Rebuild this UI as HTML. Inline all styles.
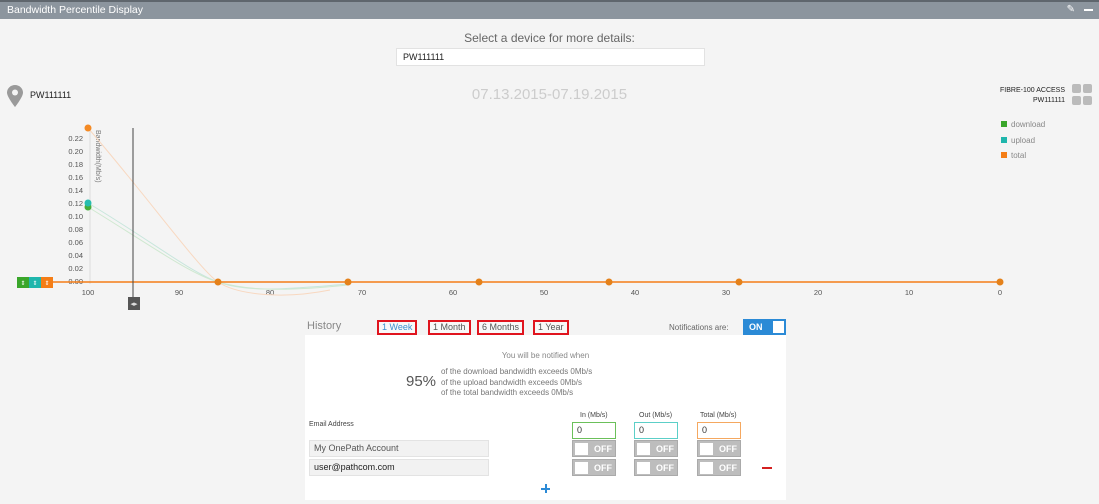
<!DOCTYPE html>
<html><head><style>
*{margin:0;padding:0;box-sizing:border-box}
body{width:1099px;height:504px;background:#f4f4f4;font-family:"Liberation Sans",sans-serif;position:relative;overflow:hidden;color:#333}
.abs{position:absolute}
.bar{left:0;top:0;width:1099px;height:19px;background:#8c959e;border-top:2px solid #5f666d;color:#fff;font-size:10.5px;line-height:16px;padding-left:7px}
.tb{border:2px solid #e0141e;font-size:9px;height:15px;line-height:11px;padding:0 3px;color:#555;background:#f8f8f8}
.off{width:44px;height:17px;background:#bdbdbd;border:1px solid #aaa}
.off i{position:absolute;left:2px;top:2px;width:13px;height:12px;background:#fff}
.off b{position:absolute;left:21px;top:3px;font-size:9px;color:#fff;font-weight:bold}
.inp{height:17px;border:1px solid #e3e3e3;background:#f2f2f2;font-size:9px;line-height:15px;padding-left:4px}
.num{width:44px;height:17px;background:#fff;font-size:9px;line-height:15px;padding-left:4px}
.sm{font-size:8px;color:#555}
</style></head><body>
<div class="abs bar">Bandwidth Percentile Display<span style="position:absolute;right:24px;top:0;font-size:10px">&#9998;</span><span style="position:absolute;right:6px;top:7px;width:9px;height:2px;background:#fff"></span></div>
<div class="abs" style="left:0;top:31px;width:1099px;text-align:center;font-size:12px;color:#666">Select a device for more details:</div>
<div class="abs" style="left:396px;top:48px;width:309px;height:18px;background:#fff;border:1px solid #e2e2e2;font-size:9px;line-height:16px;padding-left:6px;color:#222">PW111111</div>
<svg class="abs" style="left:7px;top:85px" width="16" height="22" viewBox="0 0 16 22"><path d="M8 0C3.6 0 0 3.4 0 7.6 0 12 8 22 8 22s8-10 8-14.4C16 3.4 12.4 0 8 0z" fill="#9a9a9a"/><circle cx="8" cy="7.5" r="3" fill="#f4f4f4"/></svg>
<div class="abs" style="left:30px;top:90px;font-size:9px;color:#222">PW111111</div>
<div class="abs" style="left:0;top:86px;width:1099px;text-align:center;font-size:15px;color:#ccc">07.13.2015-07.19.2015</div>
<div class="abs" style="right:34px;top:86px;font-size:7px;text-align:right;line-height:10px;color:#222">FIBRE-100 ACCESS<br>PW111111</div>
<div class="abs" style="left:1072px;top:84px;width:9px;height:9px;background:#bbb;border-radius:2px"></div>
<div class="abs" style="left:1083px;top:84px;width:9px;height:9px;background:#bbb;border-radius:2px"></div>
<div class="abs" style="left:1072px;top:96px;width:9px;height:9px;background:#bbb;border-radius:2px"></div>
<div class="abs" style="left:1083px;top:96px;width:9px;height:9px;background:#bbb;border-radius:2px"></div>
<div class="abs sm" style="left:1001px;top:117px;line-height:15.5px;color:#888"><span style="display:inline-block;width:6px;height:6px;background:#3aa62a;margin-right:4px"></span>download<br><span style="display:inline-block;width:6px;height:6px;background:#1fb6ac;margin-right:4px"></span>upload<br><span style="display:inline-block;width:6px;height:6px;background:#f47d16;margin-right:4px"></span>total</div>
<svg class="abs" style="left:0;top:0" width="1099" height="320" font-family="Liberation Sans" font-size="7.5" fill="#555">
<line x1="90" y1="130" x2="90" y2="284" stroke="#ddd"/>
<g text-anchor="end">
<text x="83" y="141">0.22</text><text x="83" y="154">0.20</text><text x="83" y="167">0.18</text><text x="83" y="180">0.16</text><text x="83" y="193">0.14</text><text x="83" y="206">0.12</text><text x="83" y="219">0.10</text><text x="83" y="232">0.08</text><text x="83" y="245">0.06</text><text x="83" y="258">0.04</text><text x="83" y="271">0.02</text><text x="83" y="284">0.00</text>
</g>
<text transform="translate(96,130) rotate(90)" font-size="7" fill="#777">Bandwidth(Mb/s)</text>
<g text-anchor="middle">
<text x="88" y="295">100</text><text x="179" y="295">90</text><text x="270" y="295">80</text><text x="362" y="295">70</text><text x="453" y="295">60</text><text x="544" y="295">50</text><text x="635" y="295">40</text><text x="726" y="295">30</text><text x="818" y="295">20</text><text x="909" y="295">10</text><text x="1000" y="295">0</text>
</g>
<path d="M88 128 C150 200 200 270 218 282 S280 300 330 290" stroke="#f8d8c0" fill="none"/>
<path d="M88 203 C150 240 190 272 218 282 S280 290 348 284" stroke="#c8e6dc" fill="none"/>
<path d="M88 207 C150 245 190 274 218 282 S280 292 348 285" stroke="#cfe8d0" fill="none"/>
<line x1="52" y1="282" x2="1000" y2="282" stroke="#f47d16" stroke-width="1.5"/>
<line x1="133" y1="128" x2="133" y2="297" stroke="#444"/>
<rect x="128" y="297" width="12" height="13" fill="#555"/>
<text x="134" y="306" fill="#ddd" font-size="7" text-anchor="middle">◂▸</text>
<g fill="#e4811a"><circle cx="218" cy="282" r="3.5"/><circle cx="348" cy="282" r="3.5"/><circle cx="479" cy="282" r="3.5"/><circle cx="609" cy="282" r="3.5"/><circle cx="739" cy="282" r="3.5"/><circle cx="1000" cy="282" r="3.5"/></g>
<circle cx="88" cy="128" r="3.5" fill="#f48a24"/>
<circle cx="88" cy="207" r="3.5" fill="#45ae3a"/>
<circle cx="88" cy="203" r="3.5" fill="#27bdb0"/>
<rect x="17" y="277" width="12" height="11" fill="#3aa62a"/><rect x="29" y="277" width="12" height="11" fill="#1fb6ac"/><rect x="41" y="277" width="12" height="11" fill="#f47d16"/>
<g fill="#fff" font-size="6" text-anchor="middle"><text x="23" y="285">⇕</text><text x="35" y="285">⇕</text><text x="47" y="285">⇕</text></g>
</svg>
<div class="abs" style="left:307px;top:320px;font-size:11px;color:#888">History</div>
<div class="abs tb" style="left:377px;top:320px;color:#3b8ed0">1 Week</div>
<div class="abs tb" style="left:428px;top:320px">1 Month</div>
<div class="abs tb" style="left:477px;top:320px">6 Months</div>
<div class="abs tb" style="left:533px;top:320px">1 Year</div>
<div class="abs sm" style="left:669px;top:323px;color:#666">Notifications are:</div>
<div class="abs" style="left:743px;top:319px;width:43px;height:16px;background:#2b8ad6"><span style="position:absolute;left:6px;top:3px;font-size:9px;color:#fff;font-weight:bold">ON</span><span style="position:absolute;left:30px;top:2px;width:11px;height:12px;background:#fff"></span></div>
<div class="abs" style="left:305px;top:335px;width:481px;height:165px;background:#fff"></div>
<div class="abs sm" style="left:305px;top:351px;width:481px;text-align:center;color:#888">You will be notified when</div>
<div class="abs" style="left:406px;top:373px;font-size:15px;color:#555">95%</div>
<div class="abs sm" style="left:441px;top:367px;line-height:10.5px;color:#777">of the download bandwidth exceeds 0Mb/s<br>of the upload bandwidth exceeds 0Mb/s<br>of the total bandwidth exceeds 0Mb/s</div>
<div class="abs" style="left:309px;top:421px;font-size:7px;color:#444">Email Address</div>
<div class="abs" style="left:580px;top:412px;font-size:7px;color:#444">In (Mb/s)</div>
<div class="abs" style="left:639px;top:412px;font-size:7px;color:#444">Out (Mb/s)</div>
<div class="abs" style="left:700px;top:412px;font-size:7px;color:#444">Total (Mb/s)</div>
<div class="abs num" style="left:572px;top:422px;border:1px solid #6bc05a">0</div>
<div class="abs num" style="left:634px;top:422px;border:1px solid #5ccfc8">0</div>
<div class="abs num" style="left:697px;top:422px;border:1px solid #f5a860">0</div>
<div class="abs inp" style="left:309px;top:440px;width:180px;color:#555">My OnePath Account</div>
<div class="abs inp" style="left:309px;top:459px;width:180px;color:#222">user@pathcom.com</div>
<div class="abs off" style="left:572px;top:440px"><i></i><b>OFF</b></div>
<div class="abs off" style="left:634px;top:440px"><i></i><b>OFF</b></div>
<div class="abs off" style="left:697px;top:440px"><i></i><b>OFF</b></div>
<div class="abs off" style="left:572px;top:459px"><i></i><b>OFF</b></div>
<div class="abs off" style="left:634px;top:459px"><i></i><b>OFF</b></div>
<div class="abs off" style="left:697px;top:459px"><i></i><b>OFF</b></div>
<div class="abs" style="left:762px;top:467px;width:10px;height:2px;background:#d42020"></div>
<div class="abs" style="left:541px;top:488px;width:9px;height:2px;background:#2b8ad6"></div>
<div class="abs" style="left:544.5px;top:484px;width:2px;height:9px;background:#2b8ad6"></div>
</body></html>
